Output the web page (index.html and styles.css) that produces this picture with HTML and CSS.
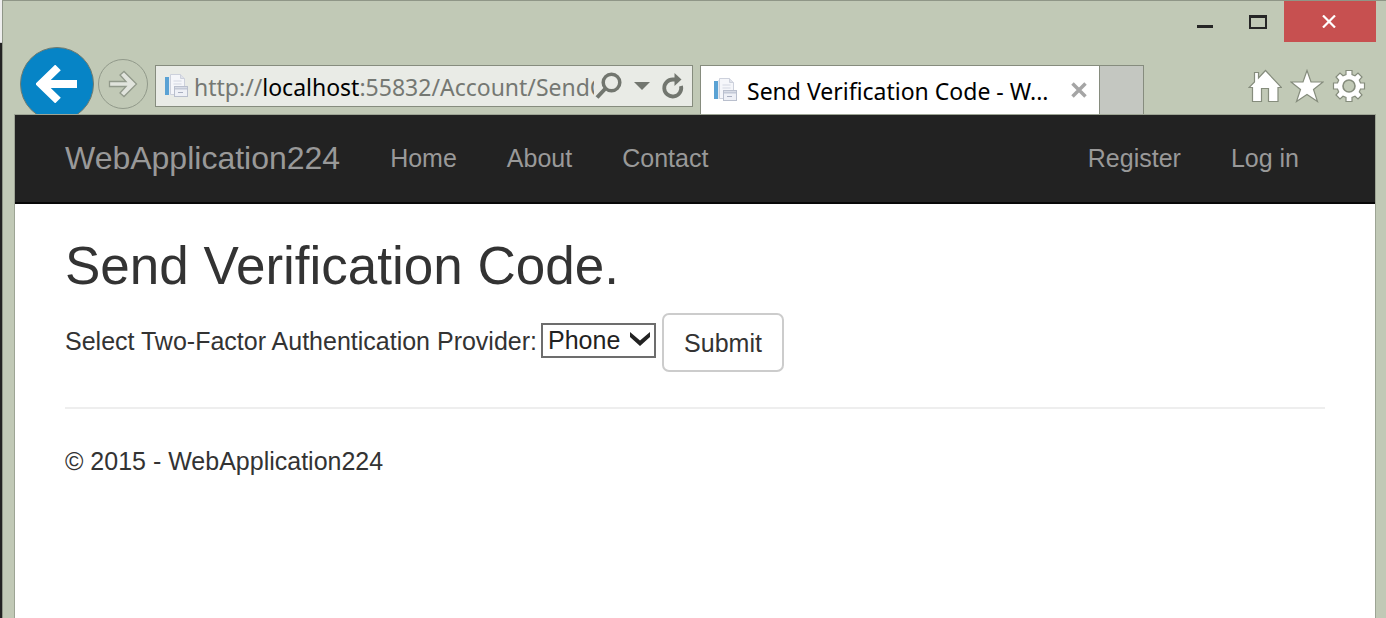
FILE: index.html
```html
<!DOCTYPE html>
<html lang="en">
<head>
<meta charset="utf-8">
<title>Send Verification Code - WebApplication224</title>
<link rel="stylesheet" href="styles.css">
</head>
<body>
<svg class="symbols" aria-hidden="true">
  <symbol id="page-icon" viewBox="0 0 24 24">
    <rect x="1" y="3" width="4" height="18" fill="#5aa2d4"/>
    <path d="M5 2h4v19H5z" fill="#e3e9f1"/>
    <path d="M6.500.500h10l4 4v16h-14z" fill="#f5f6fa" stroke="#cdd1dc"/>
    <path d="M16.500.500v4h4" fill="#dfe2ea" stroke="#cdd1dc"/>
    <path d="M9.500 7h8M9.500 10h8" stroke="#d3d7e2"/>
    <rect x="10.500" y="12.500" width="13" height="10" fill="#eef0f6" stroke="#b9bfcd"/>
    <path d="M11 14.500h12" stroke="#c3c9d7" stroke-width="2"/>
    <path d="M14 18.500h5" stroke="#a9afc0"/>
  </symbol>
</svg>
<div class="desktop">
  <div class="backdrop" aria-hidden="true"><i class="backdrop-top"></i></div>
  <div class="window">
    <header class="chrome">
      <div class="titlebar">
        <button class="win-btn" aria-label="Minimize"><svg width="16" height="14" viewBox="0 0 16 14"><rect y="10" width="16" height="3" fill="#262626"/></svg></button>
        <button class="win-btn" aria-label="Maximize"><svg width="18" height="14" viewBox="0 0 18 14"><path d="M1 1v12h16V1z" fill="none" stroke="#262626" stroke-width="2"/><path d="M0 1.500h18" stroke="#262626" stroke-width="3"/></svg></button>
        <button class="win-btn win-close" aria-label="Close"><svg width="14" height="13" viewBox="0 0 14 13"><path d="M1 .5l12 12M13 .5l-12 12" stroke="#fff" stroke-width="2.200"/></svg></button>
      </div>
      <div class="toolbar">
        <button class="nav-btn back" aria-label="Back"><svg width="42" height="38" viewBox="0 0 42 38"><path d="M41 19H5M22 2.500L5 19l17 16.500" fill="none" stroke="#fff" stroke-width="8"/></svg></button>
        <button class="nav-btn forward" aria-label="Forward"><svg width="30" height="28" viewBox="0 0 30 28"><path d="M1.500 11.500H18L12 5l4-3.500L28.500 14 16 26.500 12 23l6-6.500H1.500z" fill="#e1e4dd" stroke="#91998a" stroke-width="1.300"/></svg></button>
        <div class="address">
          <svg class="page-icon"><use href="#page-icon"/></svg>
          <div class="url" role="textbox" aria-label="Address" contenteditable="true" spellcheck="false">http://<span class="host">localhost</span>:55832/Account/SendCode</div>
          <button class="addr-btn" aria-label="Search"><svg width="27" height="28" viewBox="0 0 27 28"><circle cx="16.500" cy="10.500" r="8.300" fill="none" stroke="#72766f" stroke-width="3.500"/><path d="M10.500 16.500L2 25.500" stroke="#72766f" stroke-width="4"/></svg></button>
          <button class="addr-btn" aria-label="Show address list"><svg width="16" height="8" viewBox="0 0 16 8"><path d="M0 0h16L8 8z" fill="#72766f"/></svg></button>
          <button class="addr-btn" aria-label="Refresh"><svg width="22" height="26" viewBox="0 0 22 26"><path d="M13 6.500H11A8.500 8.500 0 1 0 19 13" fill="none" stroke="#72766f" stroke-width="3.800"/><path d="M12.500 0l7 6.500-7 6.500z" fill="#72766f"/></svg></button>
        </div>
        <div class="tab">
          <svg class="page-icon"><use href="#page-icon"/></svg>
          <span class="tab-title">Send Verification Code - W...</span>
          <button class="tab-close" aria-label="Close tab"><svg width="16" height="16" viewBox="0 0 16 16"><path d="M1.500 1.500l13 13M14.500 1.500l-13 13" stroke="#a5a5a5" stroke-width="3.500"/></svg></button>
        </div>
        <button class="new-tab" aria-label="New tab"></button>
        <div class="tools">
          <button aria-label="Home"><svg width="34" height="34" viewBox="0 0 34 34"><path d="M4.500 32.500V18.500H1L6.500 13V3.500h4V9L17.500 1.500 33.500 18.500H30v14H20.500v-13h-7v13z" fill="#fff" stroke="#858c7c" stroke-width="1.200"/></svg></button>
          <button aria-label="Favorites"><svg width="34" height="34" viewBox="0 0 34 34"><path d="M17 1.500l4 11.500H33L23.500 20.500 27.500 32.500 17 25.500 6.500 32.500 10.500 20.500 1 13h12z" fill="#fff" stroke="#858c7c" stroke-width="1.200"/></svg></button>
          <button aria-label="Tools"><svg width="34" height="34" viewBox="0 0 34 34"><path d="M14 1.500h6v4l3 1.200 3-2.700 4 4-2.700 3 1.200 3h4v6h-4l-1.200 3 2.700 3-4 4-3-2.700-3 1.200v4h-6v-4l-3-1.200-3 2.700-4-4 2.700-3-1.200-3h-4v-6h4l1.200-3L4 8l4-4 3 2.700 3-1.200z" fill="#fff" stroke="#858c7c" stroke-width="1.200"/><circle cx="17" cy="17" r="6" fill="#c1c9b6" stroke="#858c7c" stroke-width="1.600"/></svg></button>
        </div>
      </div>
    </header>
    <div class="page">
      <nav class="navbar">
        <a class="brand" href="#">WebApplication224</a>
        <a href="#">Home</a>
        <a href="#">About</a>
        <a href="#">Contact</a>
        <a class="nav-right" href="#">Register</a>
        <a href="#">Log in</a>
      </nav>
      <main class="container">
        <h2>Send Verification Code.</h2>
        <form class="provider-form">
          <div class="field">
            <label for="provider">Select Two-Factor Authentication Provider:</label>
            <span class="select-box">
              <select id="provider"><option>Phone</option></select>
              <svg class="chevron" width="20" height="14" viewBox="0 0 20 14" aria-hidden="true"><path d="M0 0l10 8.500L20 0v5L10 14 0 5z" fill="#222"/></svg>
            </span>
          </div>
          <button class="submit" type="button">Submit</button>
        </form>
        <hr>
        <footer>© 2015 - WebApplication224</footer>
      </main>
    </div>
  </div>
</div>
</body>
</html>
```
FILE: styles.css
```css
* { box-sizing: border-box; }
body {
  margin: 0;
  font: 25px/36px "Liberation Sans", Arial, sans-serif;
  color: #333;
  background: #c1c9b6;
}
button { padding: 0; border: 0; background: none; font: inherit; color: inherit; }
svg { display: block; flex: none; }
.symbols { position: absolute; width: 0; height: 0; }
.desktop { display: flex; min-height: 100vh; }
.backdrop { width: 2px; background: #222; }
.backdrop-top { display: block; height: 43px; background: #eee; border-bottom: 1px solid #ccc; }
.window {
  flex: 1;
  min-width: 0;
  display: flex;
  flex-direction: column;
  padding: 0 10px 0 11px;
  background: #c1c9b6;
  border-top: 1px solid #8f9687;
  border-left: 1px solid #8f9687;
}
.titlebar { display: flex; justify-content: flex-end; height: 41px; }
.win-btn { width: 53px; display: flex; align-items: center; justify-content: center; }
.win-close { width: 92px; padding-right: 2px; background: #c75050; }
.toolbar {
  display: flex;
  align-items: flex-start;
  height: 72px;
  padding: 0 10px 0 6px;
  overflow: hidden;
}
.nav-btn { flex: none; display: flex; align-items: center; justify-content: center; border-radius: 50%; }
.back { width: 74px; height: 74px; margin-top: 5px; background: #0684c6; border: 1px solid #6f7b70; }
.forward { width: 50px; height: 50px; margin: 17px 7px 0 4px; border: 1px solid #91998a; }
.address, .tab { display: flex; align-items: center; min-width: 0; margin-top: 23px; border: 1px solid #868c7e; font-family: "Noto Sans", sans-serif; }
.address { flex: 0 1 538px; height: 42px; padding: 0 8px; gap: 12px; background: #e9ebe6; color: #757873; }
.page-icon { width: 24px; height: 24px; }
.url { flex: 1; min-width: 0; margin: 0 -11px 0 -6px; padding-top: 2px; overflow: hidden; white-space: nowrap; font-size: 23px; line-height: 36px; outline: 0; }
.host { color: #000; }
.tab { flex: 0 1 400px; height: 50px; margin-left: 7px; padding: 0 12px; background: #fff; color: #000; }
.tab-title { flex: 1; min-width: 0; margin-left: 10px; padding-top: 2px; overflow: hidden; white-space: nowrap; font-size: 23px; }
.new-tab { flex: none; width: 45px; height: 50px; margin: 23px 0 0 -1px; background: #c4c7c1; border: 1px solid #868c7e; }
.tools { display: flex; gap: 8px; margin: 27px 0 0 auto; }
.page { flex: 1; background: #fff; border: 1px solid #9da494; border-bottom: 0; }
.navbar {
  display: flex;
  align-items: center;
  gap: 50px;
  height: 89px;
  padding: 0 76px 2px 50px;
  background: #222;
  border-bottom: 2px solid #080808;
}
.navbar a { color: #999; text-decoration: none; }
.navbar .brand { font-size: 32px; }
.navbar .nav-right { margin-left: auto; }
.container { padding: 32px 50px; }
h2 { margin: 0 0 17px; font-size: 53px; line-height: 60px; font-weight: 400; }
.provider-form { display: flex; align-items: center; gap: 6px; }
.field { display: flex; align-items: center; gap: 4px; padding-bottom: 4px; }
.select-box { position: relative; }
select {
  display: block;
  width: 115px;
  height: 35px;
  padding: 0 5px;
  border: 2px solid #6d6d6d;
  border-radius: 0;
  appearance: none;
  background: #fff;
  color: #222;
  font: inherit;
  line-height: 31px;
}
.chevron { position: absolute; right: 6px; top: 9px; pointer-events: none; }
.submit { width: 122px; height: 59px; border: 2px solid #ccc; border-radius: 7px; background: #fff; }
hr { margin: 35px 0 34px; border: 0; border-top: 2px solid #eee; }
```
